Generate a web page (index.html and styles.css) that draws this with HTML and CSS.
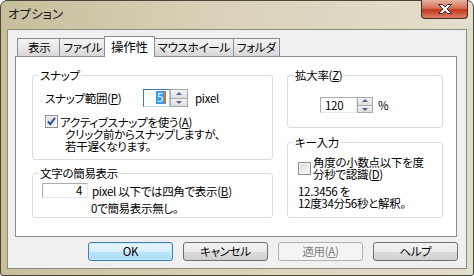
FILE: index.html
```html
<!DOCTYPE html>
<html lang="ja">
<head>
  <meta charset="UTF-8">
  <title>オプション</title>
  <link rel="stylesheet" href="styles.css">
</head>
<body>

  <div class="window">
    <!-- タイトルバー -->
    <div class="titlebar">
      <span class="title">オプション</span>
      <div class="close">
        <svg width="16" height="12" viewBox="0 0 16 12">
          <path d="M1.5 1.5h4l2.5 2.6 2.5-2.6h4l-4.5 4.5 4.5 4.5h-4l-2.5-2.6-2.5 2.6h-4l4.5-4.5z" fill="#fff" stroke="#3b2f2c" stroke-width="1" stroke-linejoin="round"/>
        </svg>
      </div>
    </div>

    <div class="client">
      <!-- タブ -->
      <div class="tabs">
        <div class="tab">表示</div>
        <div class="tab">ファイル</div>
        <div class="tab active">操作性</div>
        <div class="tab">マウスホイール</div>
        <div class="tab">フォルダ</div>
      </div>

      <div class="panel">
        <div class="col left">
          <div class="group snap">
            <span class="legend">スナップ</span>
            <div class="row">
              <span class="label">スナップ範囲(<u>P</u>)</span>
              <div class="spin">
                <span class="field focus"><span class="sel">5</span></span>
                <span class="arrows"><i class="up"></i><i class="down"></i></span>
              </div>
              <span class="unit">pixel</span>
            </div>
            <div class="check top">
              <span class="box checked">
                <svg width="11" height="11" viewBox="0 0 11 11"><path d="M2 5.5l2.3 2.7L9 1.8" fill="none" stroke="#2a4f9c" stroke-width="2"/></svg>
              </span>
              <div class="text">
                アクティブスナップを使う(<u>A</u>)
                <div class="note">クリック前からスナップしますが、<br>若干遅くなります。</div>
              </div>
            </div>
          </div>

          <div class="group simple">
            <span class="legend">文字の簡易表示</span>
            <div class="row">
              <span class="field num">4</span>
              <span class="unit">pixel 以下では四角で表示(<u>B</u>)</span>
            </div>
            <div class="hint">0で簡易表示無し。</div>
          </div>
        </div>

        <div class="col right">
          <div class="group zoom">
            <span class="legend">拡大率(<u>Z</u>)</span>
            <div class="row">
              <div class="spin small">
                <span class="field">120</span>
                <span class="arrows"><i class="up"></i><i class="down"></i></span>
              </div>
              <span class="unit">%</span>
            </div>
          </div>

          <div class="group keys">
            <span class="legend">キー入力</span>
            <div class="check">
              <span class="box"></span>
              <div class="text">角度の小数点以下を度<br>分秒で認識(<u>D</u>)</div>
            </div>
            <div class="example">12.3456 を<br>12度34分56秒と解釈。</div>
          </div>
        </div>
      </div>

      <!-- ボタン -->
      <div class="buttons">
        <div class="btn default">OK</div>
        <div class="btn">キャンセル</div>
        <div class="btn disabled">適用(<u>A</u>)</div>
        <div class="btn">ヘルプ</div>
      </div>
    </div>
  </div>

</body>
</html>
```

FILE: styles.css
```css
body {
  margin: 0;
  font-family: "Noto Sans CJK JP", "Noto Sans", sans-serif;
  font-size: 11.5px;
  font-feature-settings: "palt";
  letter-spacing: -0.3px;
  color: #000;
  background: #fff;
}

u {
  text-decoration: underline;
  text-underline-offset: 1px;
}

.window {
  box-sizing: border-box;
  width: 474px;
  height: 276px;
  padding: 0 6px 6px;
  border: 1px solid #4a4738;
  border-radius: 7px 7px 3px 3px;
  background: linear-gradient(to right, #c7be9c, #d9d2b8 45%, #e3dfcd);
}

/* Title bar */
.titlebar {
  height: 28px;
  display: flex;
  justify-content: space-between;
  align-items: flex-start;
}

.title {
  margin: 5px 0 0 1px;
  font-size: 12.5px;
  letter-spacing: 0;
  line-height: 16px;
  color: #1c1c1c;
}

.close {
  box-sizing: border-box;
  width: 47px;
  height: 19px;
  margin: -1px -1px 0 0;
  border: 1px solid #4c2a22;
  border-top: none;
  border-radius: 0 0 4px 4px;
  background: linear-gradient(#e6b1a0, #d47158 45%, #c0391c 55%, #d9806a);
  display: flex;
  align-items: center;
  justify-content: center;
}

/* Client area */
.client {
  box-sizing: border-box;
  height: 240px;
  border: 1px solid #8d8a7b;
  background: #f0f0f0;
  padding: 6px 0 0 0;
}

.tabs {
  display: flex;
  align-items: flex-end;
  height: 20px;
  padding-left: 9px;
}

.tab {
  box-sizing: border-box;
  height: 18px;
  padding: 0 3px;
  border: 1px solid #898c95;
  border-bottom: none;
  background: linear-gradient(#f3f3f3, #e8e8e8 50%, #d6d6d6);
  line-height: 17px;
  white-space: nowrap;
}

.tab:first-child {
  padding: 0 9px 0 10px;
}

.tab + .tab {
  border-left: none;
}

.tab.active {
  position: relative;
  z-index: 1;
  height: 21px;
  margin: 0 -1px -1px -2px;
  padding: 0 6px;
  border-left: 1px solid #898c95;
  background: #fff;
  line-height: 19px;
  font-size: 12.5px;
}

.tab.active + .tab {
  border-left: 1px solid #898c95;
}

.panel {
  box-sizing: border-box;
  width: 442px;
  height: 181px;
  margin-left: 7px;
  padding: 18px 0 0 16px;
  border: 1px solid #898c95;
  background: #fff;
  display: grid;
  grid-template-columns: 241px 156px;
  column-gap: 14px;
  align-items: start;
}

.col {
  display: flex;
  flex-direction: column;
}

.left {
  gap: 13px;
}

.right {
  gap: 14px;
}

/* Group boxes */
.group {
  position: relative;
  box-sizing: border-box;
  border: 1px solid #d5dfe5;
  border-radius: 3px;
  padding-left: 12px;
}

.legend {
  position: absolute;
  top: -8px;
  left: 6px;
  padding: 0 1px;
  line-height: 14px;
  background: #fff;
}

.snap { height: 85px; }
.simple { height: 45px; padding-left: 9px; }
.zoom { height: 53px; padding-left: 32px; }
.keys { height: 76px; padding-left: 10px; }

.row {
  display: flex;
  align-items: center;
  line-height: 14px;
}

.snap .row {
  margin-top: 13px;
  height: 18px;
}

.label {
  width: 98px;
  white-space: nowrap;
}

.unit {
  margin-left: 7px;
  white-space: nowrap;
}

/* Spin boxes and edits */
.spin {
  display: flex;
  height: 18px;
}

.field {
  box-sizing: border-box;
  height: 100%;
  border: 1px solid #abadb3;
  border-right-color: #e3e9ef;
  border-bottom-color: #e3e9ef;
  background: #fff;
  padding: 0 3px;
  line-height: 15px;
  text-align: right;
}

.spin .field {
  width: 27px;
}

.field.focus {
  border-color: #3d7bad;
  border-right-color: #a4c9e3;
  border-bottom-color: #b7d9ed;
}

.sel {
  display: inline-block;
  background: #3399ff;
  color: #fff;
  line-height: 13px;
  padding: 0 1px;
  border-right: 2px solid #e0701c;
}

.arrows {
  display: flex;
  flex-direction: column;
  width: 18px;
}

.arrows i {
  flex: 1;
  box-sizing: border-box;
  border: 1px solid #a9a9a9;
  background: linear-gradient(#f4f4f4, #dedede);
  position: relative;
}

.arrows i + i {
  border-top: none;
}

.arrows i::after {
  content: "";
  position: absolute;
  left: 50%;
  top: 50%;
  margin: -2px 0 0 -3px;
  border: 3px solid transparent;
}

.arrows .up::after {
  border-bottom: 3px solid #4e6591;
  border-top: none;
}

.arrows .down::after {
  border-top: 3px solid #4e6591;
  border-bottom: none;
  margin-top: -1px;
}

.spin.small {
  height: 16px;
}

.spin.small .field {
  width: 37px;
  text-align: left;
  padding-left: 4px;
  line-height: 14px;
}

.spin.small .arrows {
  width: 16px;
}

.zoom .row {
  margin-top: 21px;
}

.zoom .unit {
  margin-left: 5px;
}

.simple .row {
  margin-top: 9px;
  height: 15px;
}

.field.num {
  width: 46px;
  padding-right: 5px;
  line-height: 13px;
}

.simple .unit {
  margin-left: 4px;
}

.hint {
  margin: 4px 0 0 49px;
  line-height: 12px;
}

/* Check boxes */
.check {
  display: flex;
  align-items: center;
  gap: 2px;
  line-height: 12px;
}

.check.top {
  align-items: flex-start;
  margin-top: 8px;
}

.keys .check {
  margin-top: 13px;
}

.box {
  box-sizing: border-box;
  width: 13px;
  height: 13px;
  flex: none;
  border: 1px solid #8f8f8f;
  background: linear-gradient(135deg, #dcdcdc, #f8f8f8);
  box-shadow: inset 0 0 0 1px #f4f4f4;
  display: flex;
  align-items: center;
  justify-content: center;
}

.check.top .text {
  padding-top: 1px;
}

.note {
  padding-left: 5px;
}

.example {
  margin-top: 5px;
  line-height: 12px;
}

/* Buttons */
.buttons {
  display: flex;
  justify-content: flex-end;
  gap: 10px;
  margin: 5px 8px 0 0;
}

.btn {
  box-sizing: border-box;
  width: 85px;
  height: 19px;
  border: 1px solid #707070;
  border-radius: 3px;
  background: linear-gradient(#f2f2f2, #ebebeb 50%, #dddddd 51%, #cfcfcf);
  text-align: center;
  line-height: 17px;
}

.btn.default {
  border-color: #3c7fb1;
  background: linear-gradient(#eaf6fd, #d9f0fc 50%, #bee6fd 51%, #a7d9f5);
  box-shadow: inset 0 0 0 1px #c8ecfb;
}

.btn.disabled {
  border-color: #adb2b5;
  background: #f4f4f4;
  color: #838383;
}
```
